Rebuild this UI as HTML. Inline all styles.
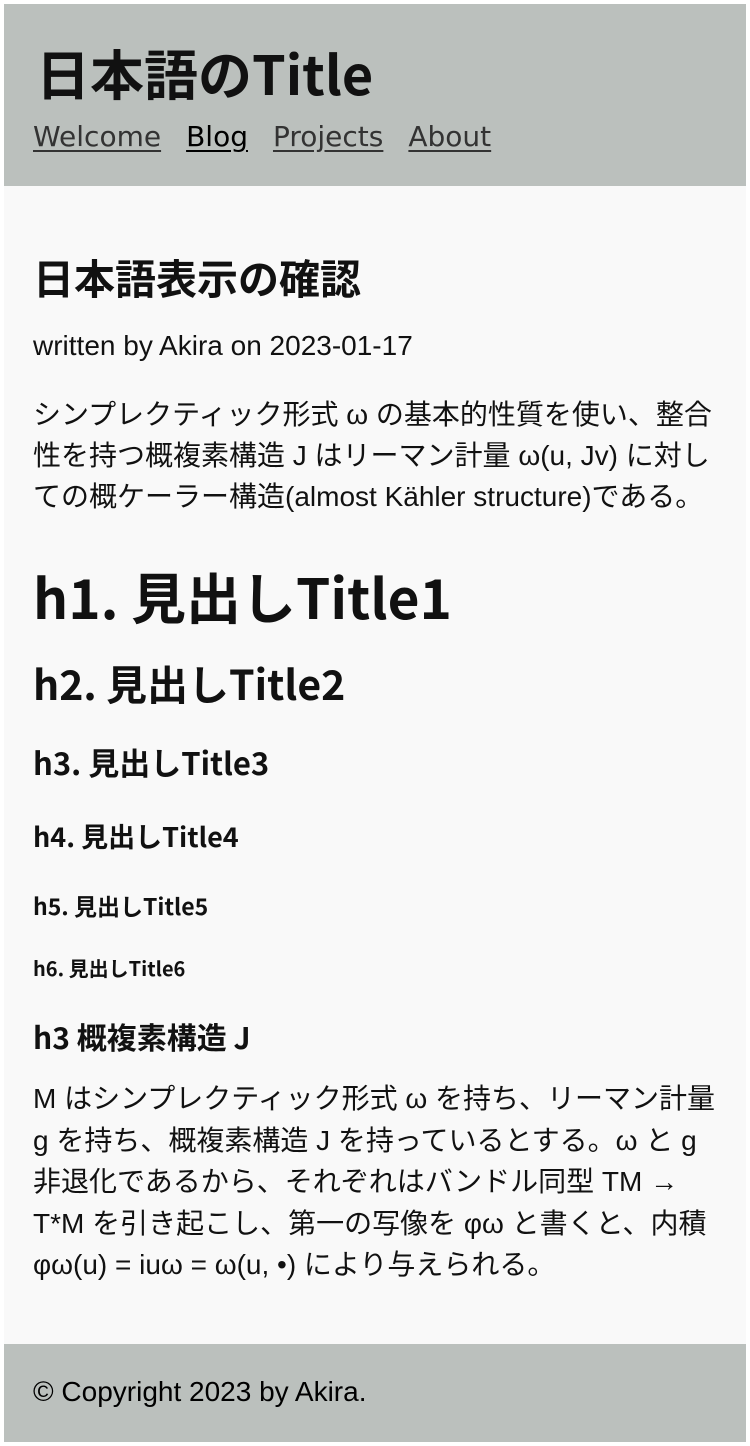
<!DOCTYPE html>
<html><head><meta charset="utf-8"><style>
html,body{margin:0;padding:0;background:#fff;}
body{width:750px;height:1446px;position:relative;overflow:hidden;}
#wrap{position:absolute;left:4px;top:4px;width:742px;height:1438px;background:#f9f9f9;}
#hdr{position:absolute;left:0;top:0;width:742px;height:182px;background:#bbc0bd;}
#ftr{position:absolute;left:0;top:1340px;width:742px;height:98px;background:#bbc0bd;}
.a{position:absolute;white-space:nowrap;left:29px;}
.h{font-family:"Noto Sans CJK JP","Liberation Sans",sans-serif;font-weight:700;color:#111;}
.p{font-family:"Liberation Sans","Noto Sans CJK JP",sans-serif;color:#111;}
nav a{font-family:"DejaVu Sans",sans-serif;font-size:28px;color:#333;text-decoration:underline;margin-right:25px;text-underline-offset:4px;}
</style></head><body><div id="wrap">
<div id="hdr">
<div class="a h" style="left:32px;top:35px;font-size:54px;line-height:66px;">日本語のTitle</div>
<nav class="a" style="top:115px;line-height:36px;"><a>Welcome</a><a style="color:#000">Blog</a><a>Projects</a><a>About</a></nav>
</div>
<div class="a h" style="top:247px;font-size:41px;line-height:50px;">日本語表示の確認</div>
<div class="a p" style="top:325px;font-size:28px;line-height:34px;">written by Akira on 2023-01-17</div>
<div class="a p" style="top:390px;font-size:28px;line-height:41px;">シンプレクティック形式 ω の基本的性質を使い、整合<br>性を持つ概複素構造 J はリーマン計量 ω(u, Jv) に対し<br>ての概ケーラー構造(almost Kähler structure)である。</div>
<div class="a h" style="top:555px;font-size:55px;line-height:72px;">h1. 見出しTitle1</div>
<div class="a h" style="top:652px;font-size:41px;line-height:52px;">h2. 見出しTitle2</div>
<div class="a h" style="top:738px;font-size:31px;line-height:40px;">h3. 見出しTitle3</div>
<div class="a h" style="top:815px;font-size:27px;line-height:34px;">h4. 見出しTitle4</div>
<div class="a h" style="top:886px;font-size:23px;line-height:30px;">h5. 見出しTitle5</div>
<div class="a h" style="top:951px;font-size:20px;line-height:26px;">h6. 見出しTitle6</div>
<div class="a h" style="top:1012px;font-size:30px;line-height:40px;">h3 概複素構造 J</div>
<div class="a p" style="top:1074px;font-size:28px;line-height:41.5px;">M はシンプレクティック形式 ω を持ち、リーマン計量<br>g を持ち、概複素構造 J を持っているとする。ω と g<br>非退化であるから、それぞれはバンドル同型 TM →<br>T*M を引き起こし、第一の写像を φω と書くと、内積<br>φω(u) = iuω = ω(u, •) により与えられる。</div>
<div id="ftr"><div class="a p" style="top:31px;font-size:28px;line-height:34px;color:#000;">© Copyright 2023 by Akira.</div></div>
</div></body></html>
